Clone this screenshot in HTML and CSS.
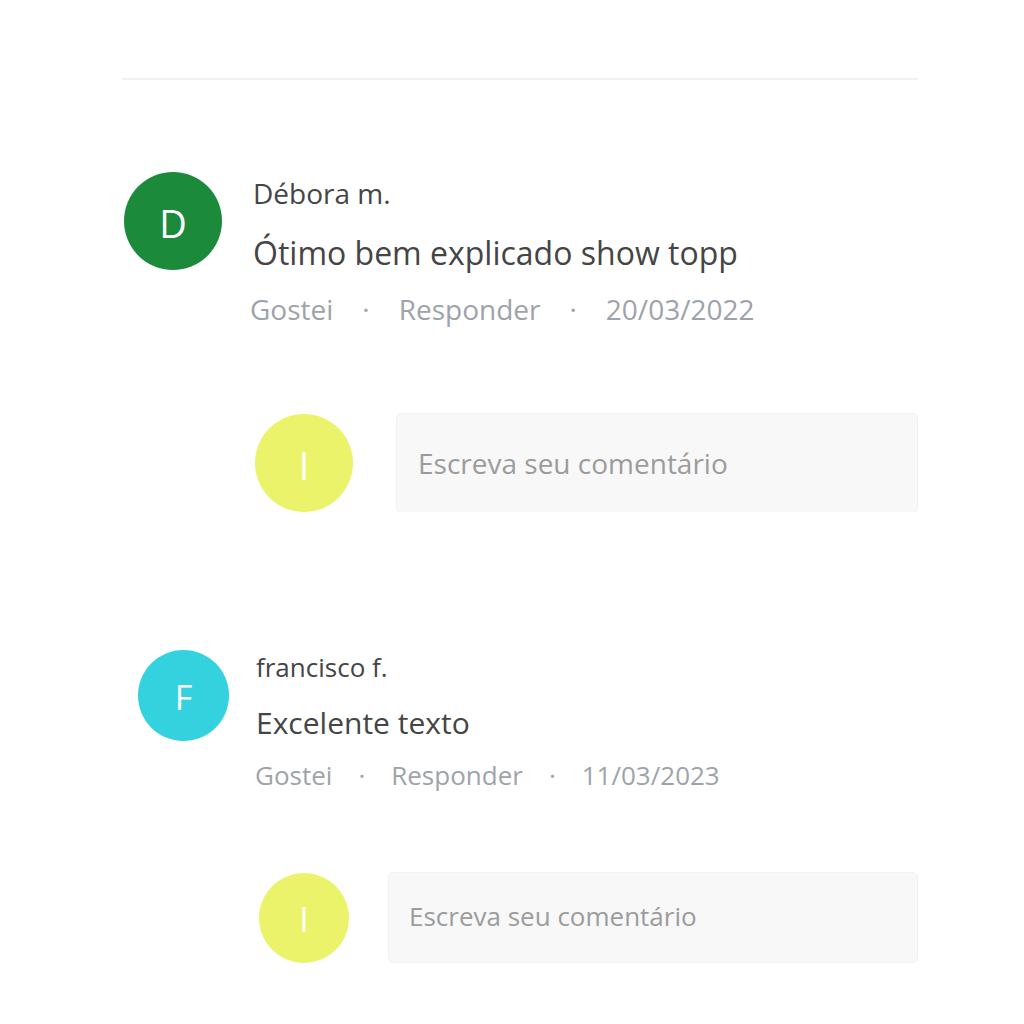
FILE: index.html
```html
<!DOCTYPE html>
<html lang="pt-BR">
<head>
<meta charset="utf-8">
<title>Comentários</title>
<link rel="stylesheet" href="styles.css">
</head>
<body>
<div class="panel panel-a">
  <div class="divider"></div>
  <div class="comment comment-a">
    <div class="avatar avatar-green">D</div>
    <div class="body">
      <div class="name">Débora m.</div>
      <div class="text">Ótimo bem explicado show topp</div>
      <div class="meta">
        <span>Gostei</span><span class="dot">·</span><span>Responder</span><span class="dot">·</span><span>20/03/2022</span>
      </div>
    </div>
  </div>
  <div class="reply reply-a">
    <div class="avatar avatar-yellow">I</div>
    <div class="input">Escreva seu comentário</div>
  </div>
</div>
<div class="panel panel-b">
  <div class="comment comment-b">
    <div class="avatar avatar-cyan">F</div>
    <div class="body">
      <div class="name">francisco f.</div>
      <div class="text">Excelente texto</div>
      <div class="meta">
        <span>Gostei</span><span class="dot">·</span><span>Responder</span><span class="dot">·</span><span>11/03/2023</span>
      </div>
    </div>
  </div>
  <div class="reply reply-b">
    <div class="avatar avatar-yellow">I</div>
    <div class="input">Escreva seu comentário</div>
  </div>
</div>
</body>
</html>
```
FILE: styles.css
```css
html, body {
  margin: 0;
  padding: 0;
  background: #ffffff;
}
body {
  font-family: "Open Sans", "Noto Sans", sans-serif;
  color: #454545;
  width: 1024px;
}
.panel {
  overflow: hidden;
}
.panel-a {
  height: 512px;
  padding-top: 78px;
  box-sizing: border-box;
}
.divider {
  margin-left: 122px;
  width: 796px;
  height: 2px;
  background: #f1f1f1;
}
.comment {
  display: flex;
  align-items: flex-start;
}
.avatar {
  flex: none;
  border-radius: 50%;
  color: #ffffff;
  display: flex;
  align-items: center;
  justify-content: center;
  box-sizing: border-box;
  line-height: 1;
}
.avatar-green { background: #1b8b3b; }
.avatar-cyan { background: #33d2de; }
.avatar-yellow { background: #ebf36b; color: #ffffff; }

.name, .text, .meta { white-space: nowrap; }
.meta {
  display: flex;
  color: #9ea3aa;
}

/* Section A */
.comment-a {
  margin-top: 92px;
  padding-left: 124px;
}
.comment-a .avatar {
  width: 98px;
  height: 98px;
  font-size: 38px;
  padding-top: 4px;
  margin-right: 28px;
}
.comment-a .body { margin-top: 2px; }
.comment-a .name { font-size: 28px; line-height: 38px; padding-left: 3px; }
.comment-a .text { font-size: 32px; line-height: 44px; margin-top: 19px; padding-left: 3px; }
.comment-a .meta { font-size: 28px; line-height: 38px; margin-top: 15px; gap: 29px; }

.reply {
  display: flex;
  align-items: center;
  width: 918px;
  box-sizing: border-box;
}
.reply-a {
  margin-top: 85px;
  padding-left: 255px;
}
.reply-a .avatar {
  width: 98px;
  height: 98px;
  font-size: 38px;
  padding-top: 4px;
  margin-right: 43px;
}
.input {
  flex: 1;
  background: #f8f8f8;
  border: 1px solid #f2f2f2;
  border-radius: 5px;
  color: #9c9c9c;
  box-sizing: border-box;
  white-space: nowrap;
}
.reply-a .input {
  height: 100px;
  font-size: 28px;
  line-height: 38px;
  padding: 30px 0 0 21px;
}

/* Section B */
.comment-b {
  margin-top: 138px;
  padding-left: 138px;
}
.comment-b .avatar {
  width: 91px;
  height: 91px;
  font-size: 34px;
  padding-top: 3px;
  margin-right: 26px;
}
.comment-b .name { font-size: 26px; line-height: 35px; padding-left: 1px; }
.comment-b .text { font-size: 30px; line-height: 40px; margin-top: 18px; padding-left: 1px; }
.comment-b .meta { font-size: 26px; line-height: 35px; margin-top: 15px; gap: 26px; }

.reply-b {
  margin-top: 79px;
  padding-left: 259px;
}
.reply-b .avatar {
  width: 90px;
  height: 90px;
  font-size: 34px;
  padding-top: 3px;
  margin-right: 39px;
}
.reply-b .input {
  height: 91px;
  font-size: 26px;
  line-height: 35px;
  padding: 26px 0 0 20px;
}
```
